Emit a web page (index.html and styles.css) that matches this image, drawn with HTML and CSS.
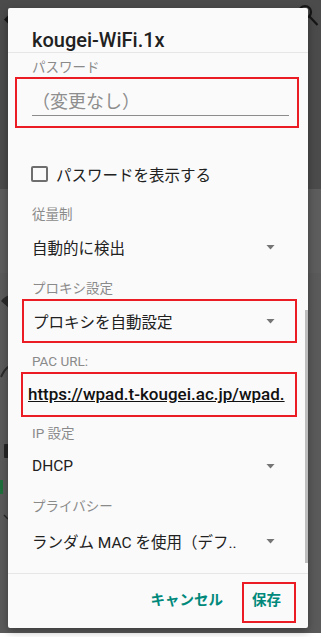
FILE: index.html
```html
<!DOCTYPE html>
<html>
<head>
  <title>Wi-Fi - kougei-WiFi.1x</title>
  <link rel="stylesheet" href="styles.css">
</head>
<body>
  <svg class="backdrop" width="321" height="637" viewBox="0 0 321 637">
    <path d="M20 11H7.83l5.59-5.59L12 4l-8 8 8 8 1.41-1.41L7.83 13H20v-2z" transform="translate(0 7.5)" fill="#161616"/>
    <g fill="none" stroke="#161616" stroke-width="2.2">
      <circle cx="305" cy="12" r="6"/>
      <path d="M309.5 16.5l8 8.5"/>
    </g>
    <path d="M1 301 Q5 296 10 295 L10 309 Z" fill="#2a2a2a"/>
    <path d="M1 377 Q5 368 10 366" fill="none" stroke="#2a2a2a" stroke-width="2"/>
    <rect x="4" y="444" width="6" height="14" rx="1" fill="#262626"/>
    <rect x="0" y="480" width="3" height="14" fill="#1f6e3c"/>
    <path d="M4 515l4 4" stroke="#262626" stroke-width="1.5"/>
  </svg>

  <div class="dialog">
    <h1 class="dialog-title">kougei-WiFi.1x</h1>

    <div class="dialog-body">
      <div class="field-label first">パスワード</div>
      <div class="mark mark-password">
        <div class="text-input">（変更なし）</div>
      </div>

      <label class="check-row"><span class="checkbox"></span>パスワードを表示する</label>

      <div class="field-label gap-20">従量制</div>
      <div class="spinner gap-12"><span>自動的に検出</span><span class="caret"></span></div>

      <div class="field-label gap-21">プロキシ設定</div>
      <div class="mark mark-proxy">
        <div class="spinner spinner-tall"><span>プロキシを自動設定</span><span class="caret"></span></div>
      </div>

      <div class="field-label gap-10">PAC URL:</div>
      <div class="mark mark-url">
        <div class="url-input">https://wpad.t-kougei.ac.jp/wpad.</div>
      </div>

      <div class="field-label gap-8">IP 設定</div>
      <div class="spinner gap-12"><span>DHCP</span><span class="caret"></span></div>

      <div class="field-label gap-20">プライバシー</div>
      <div class="spinner gap-14"><span>ランダム MAC を使用（デフ..</span><span class="caret"></span></div>

      <div class="scrollbar"></div>
    </div>

    <div class="dialog-actions">
      <button class="btn btn-cancel">キャンセル</button>
      <div class="mark mark-save"><button class="btn btn-save">保存</button></div>
    </div>
  </div>
</body>
</html>
```
FILE: styles.css
```css
body {
  margin: 0;
  width: 321px;
  height: 637px;
  overflow: hidden;
  position: relative;
  font-family: Roboto, "Noto Sans CJK JP", sans-serif;
  background: linear-gradient(#4b4b4b 0 189px, #5d5d5d 189px 273px, #5a5a5a 273px 633px, #fff 633px);
}
.backdrop {
  position: absolute;
  left: 0;
  top: 0;
}
.dialog {
  position: relative;
  margin: 8px 0 0 8px;
  width: 300px;
  height: 620px;
  background: #fafafa;
  border-radius: 2px;
  box-shadow: 0 3px 8px rgba(0,0,0,0.35);
  display: flex;
  flex-direction: column;
}
.dialog-title {
  margin: 0;
  padding: 20px 24px 0 24px;
  font-size: 20px;
  line-height: 24px;
  font-weight: 500;
  color: #212121;
  border-bottom: 1px solid #e6e6e6;
}
.dialog-body {
  flex: 1;
  position: relative;
  overflow: hidden;
  padding: 0 19px 0 24px;
}
.field-label {
  font-size: 13.5px;
  line-height: 17px;
  color: #8a8a8a;
}
.first { padding-top: 6px; }
.gap-8 { margin-top: 8px; }
.gap-10 { margin-top: 10px; }
.gap-12 { margin-top: 12px; }
.gap-14 { margin-top: 14px; }
.gap-20 { margin-top: 20px; }
.gap-21 { margin-top: 21px; }

.mark {
  border: 2px solid #ec1c24;
}
.mark-password {
  margin: 1px -10px 0 -17px;
}
.mark-proxy {
  margin: 2px -8px 0 -10px;
}
.mark-url {
  margin: 2px -8px 0 -11px;
}
.text-input {
  margin: 10px 8px 10px 15px;
  font-size: 18px;
  line-height: 26px;
  color: #8e8e8e;
  border-bottom: 1px solid #8c8c8c;
}
.check-row {
  display: flex;
  align-items: center;
  gap: 8px;
  height: 24px;
  margin-top: 34px;
  font-size: 15.5px;
  color: #212121;
}
.checkbox {
  width: 17px;
  height: 16px;
  margin-left: -1px;
  box-sizing: border-box;
  border: 2px solid #6e6e6e;
  border-radius: 2px;
}
.spinner {
  display: flex;
  align-items: center;
  justify-content: space-between;
  height: 24px;
  padding-right: 14px;
  font-size: 15.5px;
  color: #212121;
}
.spinner-tall {
  height: 40px;
  padding: 0 20px 0 9px;
}
.caret {
  width: 9px;
  height: 5px;
  background: #757575;
  clip-path: polygon(0 0, 100% 0, 50% 100%);
}
.url-input {
  height: 41px;
  padding-left: 5px;
  font-size: 17px;
  line-height: 41px;
  font-weight: 500;
  color: #111;
  text-decoration: underline;
  white-space: nowrap;
  overflow: hidden;
}
.scrollbar {
  position: absolute;
  right: 0;
  top: 257px;
  width: 3px;
  height: 253px;
  background: #bdbdbd;
}
.dialog-actions {
  display: flex;
  justify-content: flex-end;
  align-items: flex-start;
  height: 55px;
  box-sizing: border-box;
  padding: 8px 12px 0 0;
  border-top: 1px solid #e6e6e6;
}
.btn {
  background: none;
  border: none;
  padding: 0;
  font-family: Roboto, "Noto Sans CJK JP", sans-serif;
  font-size: 14.5px;
  font-weight: 700;
  color: #00897b;
  line-height: 20px;
}
.btn-cancel {
  margin: 9px 19px 0 0;
}
.mark-save {
  width: 54px;
  height: 41px;
  box-sizing: border-box;
}
.btn-save {
  display: block;
  padding-left: 8px;
  line-height: 34px;
}
```
